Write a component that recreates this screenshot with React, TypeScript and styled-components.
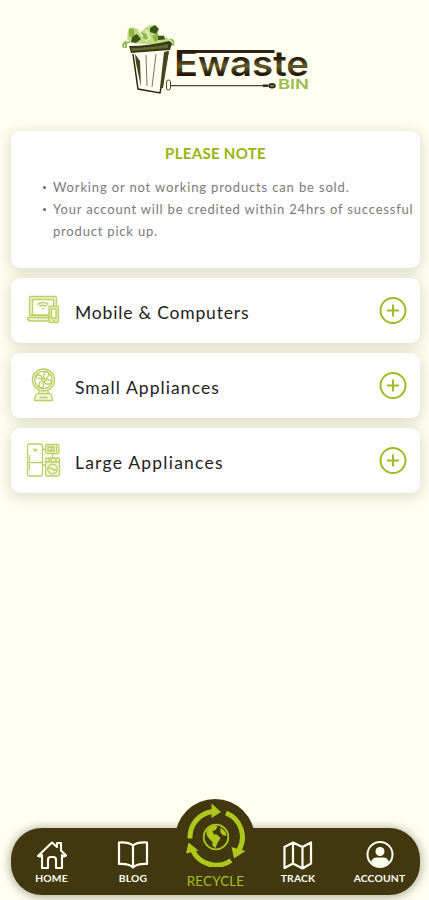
import React from "react";
import styled, { createGlobalStyle } from "styled-components";

const GlobalStyle = createGlobalStyle`
  * { box-sizing: border-box; }
  body { margin: 0; background: #fffff0; font-family: Lato, "Open Sans", sans-serif; }
`;

const Screen = styled.div`
  width: 429px;
  height: 900px;
  display: flex;
  flex-direction: column;
  padding: 20px 9px 5px 11px;
  background: #fffff0;
  overflow: hidden;
`;

const Header = styled.header`
  height: 111px;
  padding-left: 99px;
  flex: none;
`;

const Stack = styled.main`
  display: flex;
  flex-direction: column;
  gap: 10.5px;
  flex: 1;
`;

const Card = styled.section`
  background: #fefefe;
  border-radius: 9px;
  box-shadow: 0 3px 13px 2px rgba(80, 90, 50, 0.18);
`;

const NoteCard = styled(Card)`
  height: 136.5px;
  padding-top: 12px;
`;

const NoteTitle = styled.h1`
  margin: 0;
  font-size: 15px;
  line-height: 21px;
  font-weight: 700;
  letter-spacing: 0.3px;
  text-align: center;
  color: #98b50c;
`;

const NoteList = styled.ul`
  list-style: none;
  margin: 12px 0 0;
  padding: 0 0 0 42px;
  font-size: 13px;
  line-height: 22px;
  color: #7b7b7b;
`;

const NoteItem = styled.li<{ $spacing: number }>`
  position: relative;
  white-space: nowrap;
  letter-spacing: ${(p) => p.$spacing}px;
  &::before {
    content: "";
    position: absolute;
    left: -10.5px;
    top: 9.5px;
    width: 3px;
    height: 3px;
    border-radius: 50%;
    background: #666;
  }
`;

const CategoryCard = styled(Card)`
  height: 64.5px;
  display: flex;
  align-items: center;
  padding: 0 13px 0 15px;
`;

const CategoryName = styled.h2<{ $spacing: number }>`
  margin: 6px 0 0 14px;
  flex: 1;
  font-size: 17.5px;
  line-height: 24px;
  font-weight: 400;
  letter-spacing: ${(p) => p.$spacing}px;
  color: #222;
`;

const NavBar = styled.nav`
  position: relative;
  flex: none;
  height: 67px;
  border-radius: 31px;
  background: #42380f;
  box-shadow: 0 1px 9px 2px rgba(60, 55, 30, 0.35);
  display: grid;
  grid-template-columns: 81px 82px 83px 82px 81px;
`;

const Bump = styled.div`
  position: absolute;
  left: 164px;
  top: -29px;
  width: 80px;
  height: 80px;
  border-radius: 50%;
  background: #42380f;
`;

const NavItem = styled.a`
  position: relative;
  display: flex;
  flex-direction: column;
  align-items: center;
  padding-top: 11px;
  color: #fffff2;
  font-size: 10.3px;
  line-height: 12px;
  font-weight: 700;
  white-space: nowrap;
  letter-spacing: 0.2px;
  svg { flex: none; margin-bottom: 1px; }
`;

const RecycleItem = styled(NavItem)`
  padding-top: 0;
  margin-top: -25px;
  color: #a5c019;
  font-size: 13.5px;
  line-height: 16px;
  font-weight: 400;
  letter-spacing: 0.1px;
  svg { margin-bottom: 6px; }
`;

const Logo = () => (
  <svg width="205" height="80" viewBox="110 20 205 80" role="img" aria-label="Ewaste Bin">
    <path d="M131 43l-4-4 1-9 4-3 6 2 3 3 5-5 5-2 5 1 2 7-2 3 9 1 3 1 3 4-3 4z" fill="#c3dc84" />
    <path d="M129 28l5 1 1 7-6 1zM141 32l5 2 3 7-6-3zM152 36l6-3 2 6-5 3z" fill="#8cb548" />
    <path d="M132 37l5-3 4 5-5 4-5-1zM150 28l5-3 4 4-3 5-6-2zM158 36l6-.500 1 4-7 .500z" fill="#3b571b" />
    <path d="M126 41l-3 4 1 3M130 42l-4 1 0 5M170 39q5 2 3 6l-3-1" stroke="#8eb64b" strokeWidth="1.800" fill="none" />
    <path d="M138 30l5 7M146 30l4 8M146 41l4-3" stroke="#f1f8d6" strokeWidth="1.200" />
    <path d="M129 46q20 0 40-5l3 2-2 7-39 3z" fill="#343a16" />
    <path d="M131 48q20 0 37-4l0 4-36 3z" fill="#606830" />
    <path d="M133 54l5 35 22 4 8-42" fill="#fffef0" stroke="#292611" strokeWidth="1.500" />
    <path d="M146 55l1 31M156 54l-4 33" stroke="#56534a" strokeWidth=".8" fill="none" />
    <path d="M135 54l1 9 5 24-1-26zM164 52l5-1-6 37h-3z" fill="#44451f" />
    <rect x="166.500" y="80" width="4" height="10" rx="2" fill="#fffef0" stroke="#55503a" />
    <path d="M179 57q-2-5.500 4-5.500h91.500" stroke="#302311" strokeWidth="3.2" fill="none" />
    <path d="M170 85.700h96" stroke="#4b4438" strokeWidth="1.200" />
    <path d="M263 85.700h5" stroke="#302311" strokeWidth="2.500" />
    <ellipse cx="272" cy="85.700" rx="3" ry="2" fill="#777056" stroke="#302311" strokeWidth="1.500" />
    <defs>
      <linearGradient id="word" gradientUnits="userSpaceOnUse" x1="0" y1="50" x2="0" y2="77">
        <stop offset="0.3" stopColor="#291c0c" />
        <stop offset="0.6" stopColor="#645d26" />
        <stop offset="0.9" stopColor="#231808" />
      </linearGradient>
    </defs>
    <text fontFamily="Inter" fontWeight="600" fontSize="35" fill="url(#word)">
      <tspan x="174" y="76" textLength="24" lengthAdjust="spacingAndGlyphs">E</tspan>
      <tspan x="198" y="76" textLength="111" lengthAdjust="spacingAndGlyphs">waste</tspan>
      <tspan x="278" y="89" fontSize="13.5" textLength="31" lengthAdjust="spacingAndGlyphs" fill="#9abd4c">BIN</tspan>
    </text>
  </svg>
);

const DevicesIcon = () => (
  <svg width="35" height="34" viewBox="0 0 35 34" fill="none" stroke="#bdcf65" strokeWidth="1.4" strokeLinejoin="round">
    <path d="M3.500 23V5q0-1.500 1.500-1.500h24q1.500 0 1.500 1.500v7M3 22.500H23M1.500 24.500h22v3.500H5q-3.500 0-3.500-3.500z" fill="#eef3ce" />
    <rect x="6.500" y="6.500" width="21" height="15.500" fill="#fefefe" />
    <path d="M11.500 11.500q5.500-4 11 0M13.500 13.500q3.500-2.500 7 0M16 15.500h2" strokeWidth="1.700" />
    <rect x="23" y="13" width="9.500" height="16.500" rx="1.500" fill="#e4edb5" />
    <path d="M25.500 16h4.500v9h-4.500z" fill="#fff" />
    <path d="M27 27.500h2" />
  </svg>
);

const FanIcon = () => (
  <svg width="35" height="34" viewBox="0 0 35 34" fill="none" stroke="#bdce63" strokeWidth="1.4" strokeLinejoin="round">
    <circle cx="17.500" cy="12" r="11" />
    <circle cx="17.500" cy="12" r="8.700" />
    <circle cx="17.500" cy="12" r="1.800" fill="#e8efc3" />
    <path d="M16 11Q9 11 10.500 7q4-1 6 3.500M18 10q-1-6 3-6.500 4 3-1 7.500M19 12q7-1 6 3-3 3-7-1M17 14q2 5-2 6-4-2-.500-6.500" />
    <path d="M13 22.500v3M22 22.500v3M11.500 25.500h12q3 2 3 7h-18q0-5 3-7zM13.500 29.500h8" fill="#f1f5d9" />
  </svg>
);

const FridgeIcon = () => (
  <svg width="35" height="34" viewBox="0 0 35 34" fill="none" stroke="#bdce63" strokeWidth="1.3">
    <rect x="1.500" y="1" width="15" height="32" rx="2" />
    <path d="M2 19.500h14.500M3.500 12v6M3.500 21v6M7 6.500h4.500M8.500 8h2M17 6.500h3M17 22h3M26.500 11v4" />
    <rect x="19.500" y="1.500" width="13.500" height="9" rx="1.500" fill="#eff4d6" />
    <path d="M22 4h6v4h-6zM30.500 3v6M24 8l3-4" />
    <rect x="19.500" y="15" width="14" height="18" rx="1.500" fill="#f1f5da" />
    <path d="M20 19h13M22 17h4M29 17h2" />
    <circle cx="26.500" cy="26" r="4.800" />
    <path d="M23 26q2-2 3.500 0t3.500 0" />
  </svg>
);

const PlusIcon = () => (
  <svg width="28" height="28" viewBox="0 0 28 28" fill="none" stroke="#a1bb22" strokeWidth="2">
    <circle cx="14" cy="14.500" r="12.500" />
    <path d="M14 8.500v12M8 14.500h12" />
  </svg>
);

const HomeIcon = () => (
  <svg width="32" height="32" viewBox="0 0 32 32" fill="none" stroke="#fffff2" strokeWidth="2.100" strokeLinejoin="round" strokeLinecap="round">
    <path d="M2 17L16 3.500l5 4.500V4h4v7.500l5 5-2 1-2-1.500v13h-6v-8q0-3-2.500-3h-3q-2.500 0-2.500 3v8H6V16l-2 1.500z" />
  </svg>
);

const BookIcon = () => (
  <svg width="32" height="32" viewBox="0 0 32 32" fill="none" stroke="#fffff2" strokeWidth="2.200" strokeLinejoin="round">
    <path d="M16 6.500Q12 3 2 3.500V25q10-.500 14 3.500 4-4 14-3.500V3.500Q20 3 16 6.500z" />
    <path d="M16 6.500V28.500" />
  </svg>
);

const MapIcon = () => (
  <svg width="32" height="32" viewBox="0 0 32 32" fill="none" stroke="#fffff2" strokeWidth="2.200" strokeLinejoin="round">
    <path d="M2.500 8l8.500-4.500 9.500 4.500 8.500-4.500v21l-8.500 5-9.500-5-8.500 4.500zM11 3.500v21M20.500 8v21" />
  </svg>
);

const AccountIcon = () => (
  <svg width="32" height="32" viewBox="0 0 32 32" fill="none" stroke="#fffff2" strokeWidth="2">
    <circle cx="16" cy="15.500" r="12.500" />
    <circle cx="16" cy="12.500" r="4.500" fill="#fffff2" stroke="none" />
    <path d="M7 23.500q1-5 6-5h6q5 0 6 5-9 8-18 0z" fill="#fffff2" stroke="none" />
  </svg>
);

const RecycleIcon = () => (
  <svg width="64" height="64" viewBox="183.5 803 64 64" fill="none" stroke="#adc81a" strokeWidth="5">
    <path d="M189.500 838.500A26 26 0 0 1 212 811.500M225.500 813A26 26 0 0 1 238.500 850M230.500 860.500A26 26 0 0 1 192 850" />
    <path d="M211 803.500l9.500 8.500-9.500 6zM231 847l14 4-11.500 7.500zM188 842.500l10 8-12.500 3z" fill="#adc81a" stroke="none" />
    <circle cx="215.500" cy="837" r="12.300" strokeWidth="1.800" />
    <path d="M206 831q4-6 9-6l2 2-2 3-3 1 1 3 4 1 3 3-3 5-2 5-3-2v-4l-3-3-3-4zM220 827l5 5 1 4-4-1-2-3z" fill="#adc81a" stroke="none" />
  </svg>
);

const categories = [
  { name: "Mobile & Computers", icon: <DevicesIcon />, spacing: 0.83 },
  { name: "Small Appliances", icon: <FanIcon />, spacing: 1.07 },
  { name: "Large Appliances", icon: <FridgeIcon />, spacing: 1.22 },
];

export default function App() {
  return (
    <>
      <GlobalStyle />
      <Screen>
        <Header><Logo /></Header>
        <Stack>
          <NoteCard>
            <NoteTitle>PLEASE NOTE</NoteTitle>
            <NoteList>
              <NoteItem $spacing={0.85}>Working or not working products can be sold.</NoteItem>
              <NoteItem $spacing={0.81}>Your account will be credited within 24hrs of successful<br />product pick up.</NoteItem>
            </NoteList>
          </NoteCard>
          {categories.map((c) => (
            <CategoryCard key={c.name}>
              {c.icon}
              <CategoryName $spacing={c.spacing}>{c.name}</CategoryName>
              <PlusIcon />
            </CategoryCard>
          ))}
        </Stack>
        <NavBar>
          <Bump />
          <NavItem><HomeIcon />HOME</NavItem>
          <NavItem><BookIcon />BLOG</NavItem>
          <RecycleItem><RecycleIcon />RECYCLE</RecycleItem>
          <NavItem><MapIcon />TRACK</NavItem>
          <NavItem><AccountIcon />ACCOUNT</NavItem>
        </NavBar>
      </Screen>
    </>
  );
}
